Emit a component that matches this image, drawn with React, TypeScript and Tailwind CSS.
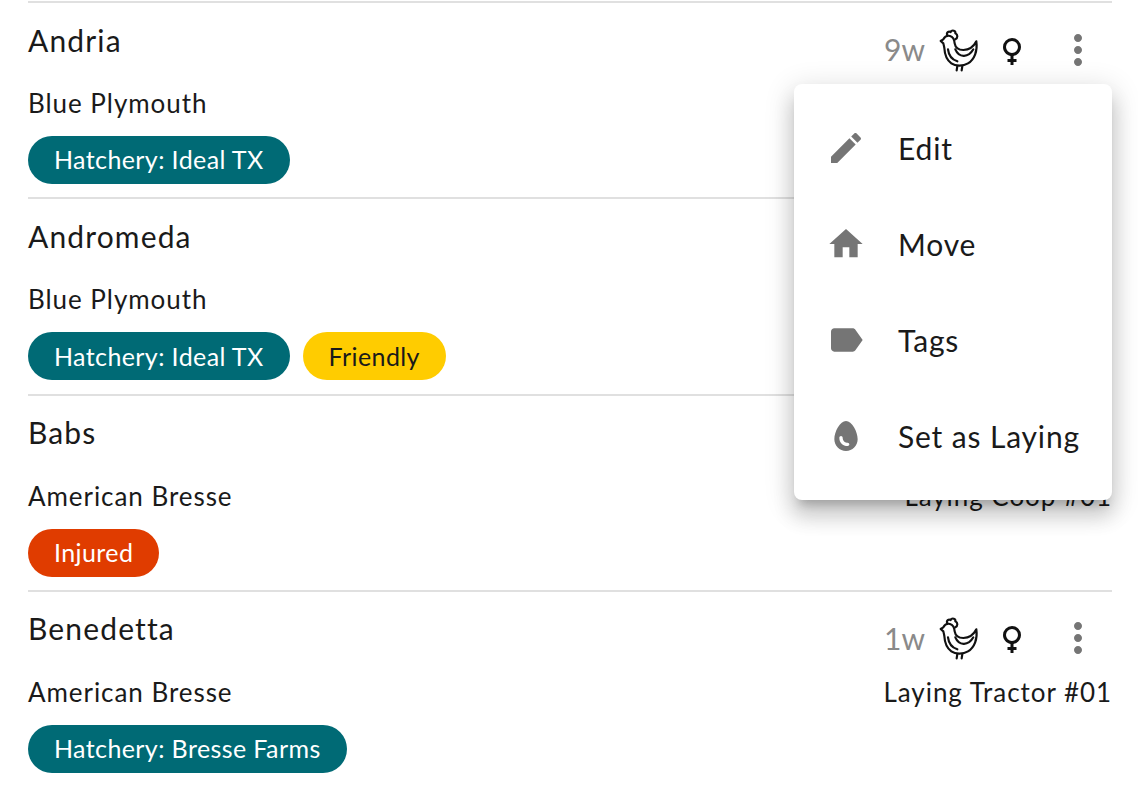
import React from "react";

const Hen = () => (
  <svg width="40" height="44" viewBox="25 8 120 132" fill="none" stroke="#111" strokeWidth="6.5" strokeLinecap="round" strokeLinejoin="round">
    <path d="M30 47 L38 42 C42 34 50 30 58 32 C66 34 71 42 72 54 C74 66 84 74 98 74 C112 74 128 66 137 48 C141 76 132 102 112 114 C98 122 76 124 62 114 C48 104 42 86 41 68 C40 60 38 56 38 54 Z" />
    <path d="M50 30 C46 22 54 16 60 20 C64 12 76 16 74 24 C82 28 82 38 74 42" />
    <path d="M74 72 C84 96 112 100 128 72" />
    <path d="M52 72 C54 90 62 102 80 108" />
    <path d="M80 122 L78 135 M95 122 L93 135" />
  </svg>
);

const Venus = () => (
  <svg width="36" height="36" viewBox="0 0 24 24" fill="#111">
    <path d="M12,4A6,6 0 0,1 18,10C18,12.97 15.84,15.44 13,15.92V18H15V20H13V22H11V20H9V18H11V15.92C8.16,15.44 6,12.97 6,10A6,6 0 0,1 12,4M12,6A4,4 0 0,0 8,10A4,4 0 0,0 12,14A4,4 0 0,0 16,10A4,4 0 0,0 12,6Z" />
  </svg>
);

const Dots = () => (
  <svg width="48" height="48" viewBox="0 0 24 24" fill="#757575">
    <path d="M12 8c1.1 0 2-.9 2-2s-.9-2-2-2-2 .9-2 2 .9 2 2 2zm0 2c-1.1 0-2 .9-2 2s.9 2 2 2 2-.9 2-2-.9-2-2-2zm0 6c-1.1 0-2 .9-2 2s.9 2 2 2 2-.9 2-2-.9-2-2-2z" />
  </svg>
);

const tones: Record<string, string> = {
  teal: "bg-[#006a75] text-white",
  yellow: "bg-[#ffcc00] text-[#1a1a1a]",
  red: "bg-[#e03c00] text-white",
};

const birds = [
  { name: "Andria", breed: "Blue Plymouth", age: "9w", place: "Laying Coop #01", tags: [["Hatchery: Ideal TX", "teal"]] },
  { name: "Andromeda", breed: "Blue Plymouth", age: "9w", place: "Laying Coop #01", tags: [["Hatchery: Ideal TX", "teal"], ["Friendly", "yellow"]] },
  { name: "Babs", breed: "American Bresse", age: "1w", place: "Laying Coop #01", tags: [["Injured", "red"]] },
  { name: "Benedetta", breed: "American Bresse", age: "1w", place: "Laying Tractor #01", tags: [["Hatchery: Bresse Farms", "teal"]] },
];

const menu = [
  { label: "Edit", d: "M3 17.25V21h3.75L17.81 9.94l-3.75-3.75L3 17.25zM20.71 7.04c.39-.39.39-1.02 0-1.41l-2.34-2.34c-.39-.39-1.02-.39-1.41 0l-1.83 1.83 3.75 3.75 1.83-1.83z" },
  { label: "Move", d: "M10 20v-6h4v6h5v-8h3L12 3 2 12h3v8z" },
  { label: "Tags", d: "M17.63 5.84C17.27 5.33 16.67 5 16 5L5 5.01C3.9 5.01 3 5.9 3 7v10c0 1.1.9 1.99 2 1.99L16 19c.67 0 1.27-.33 1.63-.84L22 12l-4.37-6.16z" },
  { label: "Set as Laying", d: "M12 3C8.5 3 5 9.33 5 14c0 3.87 3.13 7 7 7s7-3.13 7-7c0-4.67-3.5-11-7-11zm1 15c-3 0-5-1.99-5-5 0-.55.45-1 1-1s1 .45 1 1c0 2.21 1.79 3 3 3 .55 0 1 .45 1 1s-.45 1-1 1z" },
];

export default function App() {
  return (
    <div className="relative h-[788px] w-[1138px] overflow-hidden bg-white pl-[28px] pr-[26px] pt-[1px] font-['Lato',sans-serif] text-[#1a1a1a]">
      {birds.map((b) => (
        <div key={b.name} className="flex h-[196.25px] justify-between border-t-2 border-[#e0e0e0]">
          <div>
            <div className="mt-[18.5px] h-[36px] text-[30px] leading-[36px] tracking-[1.15px]">{b.name}</div>
            <div className="mt-[29.5px] h-[32px] text-[26px] leading-[32px] tracking-[0.95px]">{b.breed}</div>
            <div className="mt-[17px] flex gap-[13px]">
              {b.tags.map(([t, tone]) => (
                <span key={t} className={`flex h-[48px] items-center rounded-[24px] px-[26px] text-[25px] tracking-[0.4px] ${tones[tone]}`}>
                  {t}
                </span>
              ))}
            </div>
          </div>
          <div className="flex flex-col items-end">
            <div className="mt-[22.5px] flex h-[48px] items-center pr-[10px]">
              <span className="text-[30px] text-[#8a8a8a]">{b.age}</span>
              <span className="ml-[14px]"><Hen /></span>
              <span className="ml-[15px]"><Venus /></span>
              <span className="ml-[24px]"><Dots /></span>
            </div>
            <div className="mt-[13.5px] h-[32px] text-[26px] leading-[32px] tracking-[0.95px]">{b.place}</div>
          </div>
        </div>
      ))}
      <div className="absolute left-[794px] top-[84px] w-[318px] rounded-[8px] bg-white py-[16px] shadow-[0_10px_10px_-6px_rgba(0,0,0,0.2),0_16px_20px_2px_rgba(0,0,0,0.14),0_6px_28px_4px_rgba(0,0,0,0.12)]">
        {menu.map((m) => (
          <div key={m.label} className="flex h-[96px] items-center pl-[32px]">
            <svg width="40" height="40" viewBox="0 0 24 24" fill="#757575">
              <path d={m.d} />
            </svg>
            <span className="ml-[32px] text-[30px] tracking-[0.85px]">{m.label}</span>
          </div>
        ))}
      </div>
    </div>
  );
}
